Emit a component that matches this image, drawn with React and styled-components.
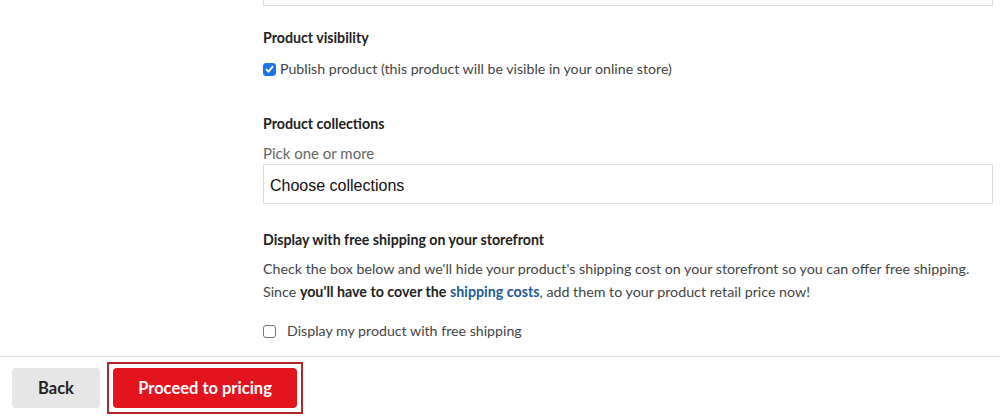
import { createGlobalStyle } from "styled-components";
import styled from "styled-components";

const GlobalStyle = createGlobalStyle`
  html, body {
    margin: 0;
    padding: 0;
    background: #fff;
  }

  body {
    font-family: "Lato", "Noto Sans", sans-serif;
    color: #333;
  }
`;

const Page = styled.div`
  width: 1000px;
  height: 419px;
  overflow: hidden;
  display: flex;
  flex-direction: column;
`;

const Content = styled.div`
  flex: 1;
  padding-left: 263px;
  padding-right: 7px;
`;

const TopField = styled.div`
  height: 5px;
  border: 1px solid #ddd;
  border-top: none;
`;

const Section = styled.section`
  margin-top: ${(p) => p.gap}px;
`;

const Heading = styled.h3`
  margin: 0;
  font-size: 14.2px;
  line-height: 18px;
  font-weight: 700;
  color: #222;
`;

const CheckRow = styled.label`
  display: flex;
  align-items: center;
  gap: ${(p) => p.gap}px;
  margin-top: ${(p) => p.top}px;
  font-size: 14.2px;
  line-height: 18px;
  color: #444;
`;

const CheckBox = styled.span`
  width: 13px;
  height: 13px;
  box-sizing: border-box;
  border-radius: 3px;
  display: flex;
  align-items: center;
  justify-content: center;
  flex-shrink: 0;
  background: ${(p) => (p.checked ? "#1a73e8" : "#fff")};
  border: 1px solid ${(p) => (p.checked ? "#1a73e8" : "#767676")};
`;

const Hint = styled.div`
  margin-top: 11px;
  font-size: 15px;
  line-height: 18px;
  color: #666;
`;

const Select = styled.div`
  margin-top: 2px;
  height: 40px;
  box-sizing: border-box;
  border: 1px solid #ddd;
  border-radius: 2px;
  display: flex;
  align-items: center;
  padding-left: 6px;
  padding-top: 3px;
  font-family: "Liberation Sans", Arial, sans-serif;
  font-size: 16px;
  color: #111;
`;

const Text = styled.p`
  margin: 8px 0 0;
  font-size: 14.25px;
  line-height: 23px;
  color: #444;

  b {
    color: #222;
  }

  a {
    color: #1d5a9c;
    font-weight: 700;
    text-decoration: none;
  }
`;

const Footer = styled.footer`
  height: 63px;
  box-sizing: border-box;
  border-top: 1px solid #e4e4e4;
  display: flex;
  align-items: center;
  gap: 7px;
  padding: 0 0 0 12px;
`;

const Button = styled.button`
  height: 40px;
  border: none;
  border-radius: 4px;
  font-family: "Lato", "Noto Sans", sans-serif;
  font-size: 16.5px;
  font-weight: 700;
  cursor: pointer;
  background: ${(p) => (p.primary ? "#e3141d" : "#e6e6e6")};
  color: ${(p) => (p.primary ? "#fff" : "#222")};
  width: ${(p) => p.w}px;
`;

const Highlight = styled.div`
  padding: 4px;
  border: 2px solid #b2262b;
  display: flex;
`;

const Check = () => (
  <svg width="9" height="8" viewBox="0 0 9 8">
    <path d="M1 4.2 L3.5 6.6 L8 1.2" fill="none" stroke="#fff" strokeWidth="1.8" />
  </svg>
);

export default function App() {
  return (
    <>
      <GlobalStyle />
      <Page>
        <Content>
          <TopField />
          <Section gap={23}>
            <Heading>Product visibility</Heading>
            <CheckRow top={13} gap={4}>
              <CheckBox checked>
                <Check />
              </CheckBox>
              Publish product (this product will be visible in your online store)
            </CheckRow>
          </Section>
          <Section gap={37}>
            <Heading>Product collections</Heading>
            <Hint>Pick one or more</Hint>
            <Select>Choose collections</Select>
          </Section>
          <Section gap={27}>
            <Heading>Display with free shipping on your storefront</Heading>
            <Text>
              Check the box below and we'll hide your product's shipping cost on
              your storefront so you can offer free shipping.
              <br />
              Since <b>you'll have to cover the</b>{" "}
              <a href="#">shipping costs</a>, add them to your product retail
              price now!
            </Text>
            <CheckRow top={19} gap={11}>
              <CheckBox />
              Display my product with free shipping
            </CheckRow>
          </Section>
        </Content>
        <Footer>
          <Button w={88}>Back</Button>
          <Highlight>
            <Button primary w={184}>
              Proceed to pricing
            </Button>
          </Highlight>
        </Footer>
      </Page>
    </>
  );
}
